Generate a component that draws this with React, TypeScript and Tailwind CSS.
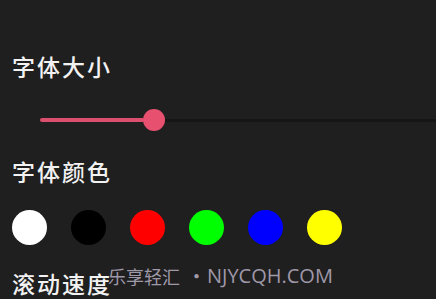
export default function App() {
  const colors = ['#ffffff', '#000000', '#ff0000', '#00ff00', '#0000ff', '#ffff00']

  return (
    <div
      className="relative w-[436px] h-[299px] overflow-hidden bg-[#1f1f1f] text-[#f2f2f2]"
      style={{ fontFamily: '"Noto Sans CJK SC", "Noto Sans", sans-serif' }}
    >
      <div className="flex flex-col pl-3 pt-[51px]">
        <div className="h-[30px] text-[23px] font-medium leading-[30px] tracking-[2px]">字体大小</div>

        <div className="mt-[28px] ml-7 flex h-[22px] items-center">
          <div className="h-1 w-[103px] rounded-l-full bg-[#dd4f6f]" />
          <div className="h-[22px] w-[22px] shrink-0 rounded-full bg-[#e8506f]" />
          <div className="h-[3px] flex-1 bg-[#161616]" />
        </div>

        <div className="mt-[25px] h-[30px] text-[23px] font-medium leading-[30px] tracking-[2px]">字体颜色</div>

        <div className="mt-6 flex gap-6">
          {colors.map((c) => (
            <div key={c} className="h-[35px] w-[35px] rounded-full" style={{ backgroundColor: c }} />
          ))}
        </div>

        <div className="mt-[23px] h-[30px] text-[23px] font-medium leading-[30px] tracking-[2px]">滚动速度</div>
      </div>

      <div className="absolute left-[108px] top-[262px] flex items-center whitespace-nowrap text-[#9f98a9]">
        <span className="text-[18px] leading-[28px]">乐享轻汇</span>
        <span className="ml-[8px] mr-[2px] text-[17px] font-bold leading-[28px]">•</span>
        <span className="text-[20px] leading-[28px]" style={{ fontFamily: '"Open Sans", sans-serif' }}>
          NJYCQH.COM
        </span>
      </div>
    </div>
  )
}
